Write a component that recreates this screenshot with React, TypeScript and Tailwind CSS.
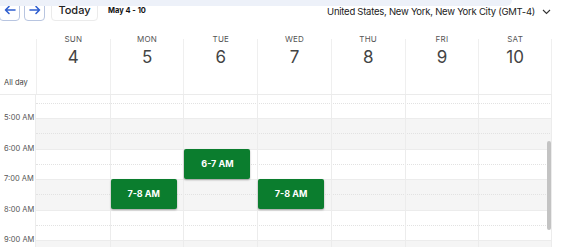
import React from "react";

const days = [
  { n: "SUN", d: 4 },
  { n: "MON", d: 5 },
  { n: "TUE", d: 6 },
  { n: "WED", d: 7 },
  { n: "THU", d: 8 },
  { n: "FRI", d: 9 },
  { n: "SAT", d: 10 },
];

const hours = [
  { label: "", gray: false },
  { label: "5:00 AM", gray: true },
  { label: "6:00 AM", gray: false },
  { label: "7:00 AM", gray: true },
  { label: "8:00 AM", gray: false },
  { label: "9:00 AM", gray: true },
];

const events: Record<number, { start: number; label: string }[]> = {
  1: [{ start: 3, label: "7-8 AM" }],
  2: [{ start: 2, label: "6-7 AM" }],
  3: [{ start: 3, label: "7-8 AM" }],
};

function ArrowLeft() {
  return (
    <svg width="12" height="10" viewBox="0 0 12 10" fill="none" stroke="#2f5fd0" strokeWidth="1.6" strokeLinecap="round" strokeLinejoin="round">
      <path d="M11 5H1.5M5 1.5L1.5 5L5 8.5" />
    </svg>
  );
}

function ArrowRight() {
  return (
    <svg width="12" height="10" viewBox="0 0 12 10" fill="none" stroke="#2f5fd0" strokeWidth="1.6" strokeLinecap="round" strokeLinejoin="round">
      <path d="M1 5H10.5M7 1.5L10.5 5L7 8.5" />
    </svg>
  );
}

export default function App() {
  return (
    <div className="relative w-[564px] h-[247px] overflow-hidden bg-white font-['Inter',sans-serif] text-[#333]">
      <div className="absolute left-0 top-0 z-20 h-[6px] w-[512px] rounded-br-[12px] bg-[#edf1f9]" />

      {/* toolbar */}
      <div className="-mt-[8px] flex h-[30px] items-start">
        <button className="-ml-[1px] flex h-[29px] w-[21px] items-center justify-center rounded-[4px] border border-[#b8c5e0] pt-[7px]">
          <ArrowLeft />
        </button>
        <button className="ml-[4px] flex h-[29px] w-[21px] items-center justify-center rounded-[4px] border border-[#b8c5e0] pt-[7px]">
          <ArrowRight />
        </button>
        <button className="ml-[6px] flex h-[29px] w-[47px] items-center justify-center rounded-[4px] border border-[#ebebeb] pt-[8px] text-[11px] font-medium text-[#222]">
          Today
        </button>
        <div className="ml-[10px] mt-[14px] text-[7.5px] font-bold leading-[10px] text-[#111]">May 4 - 10</div>
        <div className="ml-auto mr-[13px] mt-[14px] flex items-center gap-[7px] text-[9.5px] leading-[12px] tracking-[-0.25px] text-[#222]">
          <span>United States, New York, New York City (GMT-4)</span>
          <svg width="9" height="6" viewBox="0 0 9 6" fill="none" stroke="#333" strokeWidth="1.1">
            <path d="M1 1L4.5 4.5L8 1" />
          </svg>
        </div>
      </div>

      {/* header */}
      <div className="flex h-[73px] w-[552px] border-b border-[#ebebeb]">
        <div className="flex w-[36px] flex-col justify-end pb-[6px] pl-[4px] text-[7.5px] leading-[10px] text-[#444]">
          All day
        </div>
        <div className="grid flex-1 grid-cols-7">
          {days.map((d, i) => (
            <div
              key={d.n}
              className={`mt-[17px] flex flex-col items-center border-l border-[#efefef] ${i === 6 ? "border-r" : ""}`}
            >
              <div className="-mt-[5px] text-[8px] leading-[10px] tracking-[0.2px] text-[#555]">{d.n}</div>
              <div className="mt-[3px] text-[17px] leading-[20px] text-[#444]">{d.d}</div>
            </div>
          ))}
        </div>
      </div>

      {/* body */}
      <div className="h-[152px] w-[552px] overflow-hidden">
        <div className="-mt-[7.5px] flex">
          <div className="w-[36px] border-r border-[#ececec]">
            {hours.map((h, idx) => (
              <div key={idx} className="flex h-[30.5px] flex-col">
                {h.label && (
                  <div className="-mt-[5px] pl-[4px] text-[7.5px] leading-[10px] text-[#555]">{h.label}</div>
                )}
              </div>
            ))}
          </div>
          <div className="relative flex-1">
            {hours.map((h, idx) => (
              <div key={idx} className={`h-[30.5px] border-t border-[#ececec] ${h.gray ? "bg-[#f5f5f5]" : "bg-white"}`}>
                <div className="h-[15px] border-b border-dotted border-[#e2e2e2]" />
              </div>
            ))}
            <div className="absolute inset-0 grid grid-cols-7">
              {days.map((d, i) => (
                <div key={d.n} className={`relative border-[#ececec] ${i > 0 ? "border-l" : ""} ${i === 6 ? "border-r" : ""}`}>
                  {(events[i] || []).map((e) => (
                    <div
                      key={e.label}
                      className="absolute left-0 flex h-[30px] w-[66px] items-center justify-center rounded-[2px] bg-[#0b7d2e] text-[9px] font-bold text-white shadow-[0_1px_2px_rgba(0,0,0,0.35)]"
                      style={{ top: e.start * 30.5 }}
                    >
                      {e.label}
                    </div>
                  ))}
                </div>
              ))}
            </div>
          </div>
        </div>
      </div>

      {/* scrollbar */}
      <div className="absolute left-[547px] top-[141px] h-[89px] w-[4px] rounded-full bg-[#c3c3c3]" />
    </div>
  );
}
